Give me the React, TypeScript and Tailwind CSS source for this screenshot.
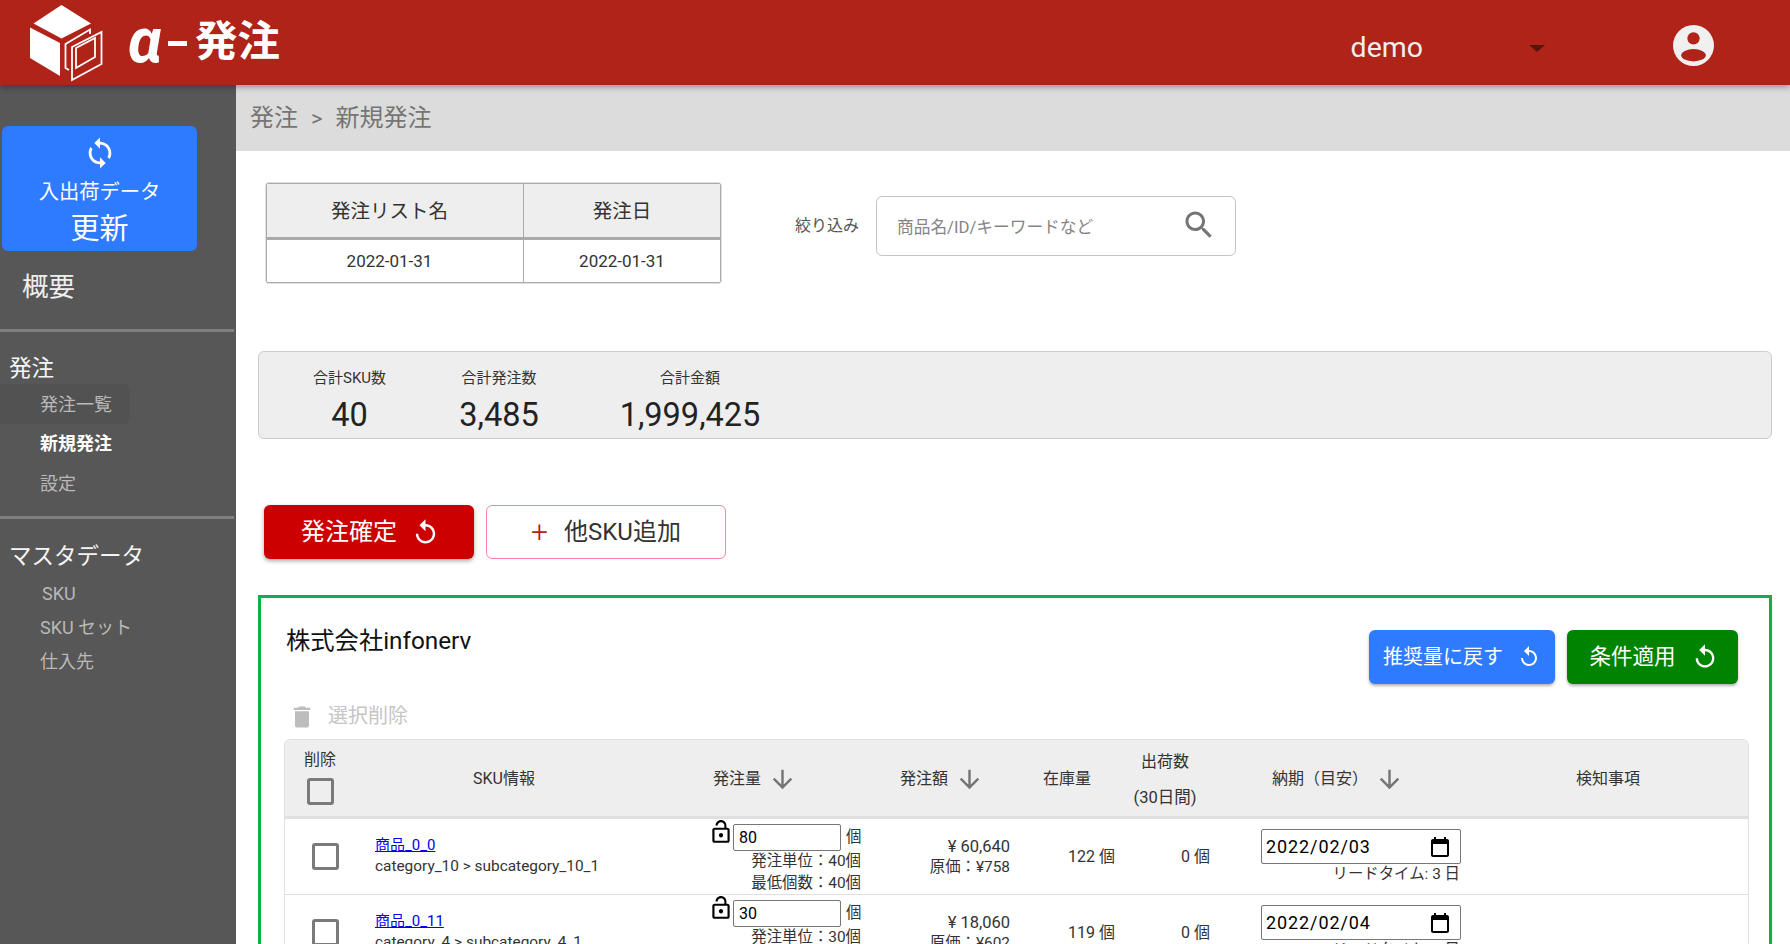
import React, { FC } from "react";

const REPLAY = "M12 5V1L7 6l5 5V7c3.31 0 6 2.69 6 6s-2.69 6-6 6-6-2.69-6-6H4c0 4.42 3.58 8 8 8s8-3.58 8-8-3.58-8-8-8z";
const SYNC = "M12 4V1L8 5l4 4V6c3.31 0 6 2.69 6 6 0 1.01-.25 1.97-.7 2.8l1.46 1.46C19.54 15.03 20 13.57 20 12c0-4.42-3.58-8-8-8zm0 14c-3.31 0-6-2.69-6-6 0-1.01.25-1.97.7-2.8L5.24 7.74C4.46 8.97 4 10.43 4 12c0 4.42 3.58 8 8 8v3l4-4-4-4v3z";
const SEARCH = "M15.5 14h-.79l-.28-.27C15.41 12.59 16 11.11 16 9.5 16 5.91 13.09 3 9.5 3S3 5.91 3 9.5 5.91 16 9.5 16c1.61 0 3.09-.59 4.23-1.57l.27.28v.79l5 4.99L20.49 19l-4.99-5zm-6 0C7.01 14 5 11.99 5 9.5S7.01 5 9.5 5 14 7.01 14 9.5 11.99 14 9.5 14z";
const TRASH = "M6 19c0 1.1.9 2 2 2h8c1.1 0 2-.9 2-2V7H6v12zM19 4h-3.5l-1-1h-5l-1 1H5v2h14V4z";
const ARROW = "M20 12l-1.41-1.41L13 16.17V4h-2v12.17l-5.58-5.59L4 12l8 8 8-8z";
const LOCK = "M12 17c1.1 0 2-.9 2-2s-.9-2-2-2-2 .9-2 2 .9 2 2 2zm6-9h-1V6c0-2.76-2.24-5-5-5S7 3.24 7 6h1.9c0-1.71 1.39-3.1 3.1-3.1 1.71 0 3.1 1.39 3.1 3.1v2H6c-1.1 0-2 .9-2 2v10c0 1.1.9 2 2 2h12c1.1 0 2-.9 2-2V10c0-1.1-.9-2-2-2zm0 12H6V10h12v10z";
const CALENDAR = "M19 4h-1V2h-2v2H8V2H6v2H5c-1.1 0-2 .9-2 2v14c0 1.1.9 2 2 2h14c1.1 0 2-.9 2-2V6c0-1.1-.9-2-2-2zm0 16H5V9h14v11z";

const Icon: FC<{ d: string; className?: string }> = ({ d, className }) => (
  <svg viewBox="0 0 24 24" fill="currentColor" className={className}>
    <path d={d} />
  </svg>
);

const Logo = () => (
  <svg viewBox="0 0 90 85" className="w-[90px] h-[85px] shrink-0">
    <polygon points="41.5,5 71,23.5 41.5,38.5 13.5,23.5" fill="#fff" />
    <polygon points="10,27.5 40,43 40,76 10,58" fill="#fff" />
    <g fill="none" stroke="#fff" strokeWidth="1.8">
      <path d="M49 70 L45.5 68 L45.5 44 L70 29.5 L70 34" />
      <polygon points="52,47 81.5,32 81.5,64 52,80" />
      <path d="M56 48 L56 68 L75 57 L75 38 Z" />
    </g>
  </svg>
);

const Checkbox: FC<{ className?: string }> = ({ className }) => (
  <div className={`w-[27px] h-[27px] border-[3px] border-[#7a7a7a] rounded-[3px] ${className ?? ""}`} />
);

const SortHead: FC<{ label: string; className: string }> = ({ label, className }) => (
  <div className={`flex items-center gap-[7px] pt-[2px] ${className}`}>
    <span>{label}</span>
    <Icon d={ARROW} className="w-[29px] h-[29px] text-[#757575]" />
  </div>
);

interface RowData {
  name: string;
  category: string;
  qty: string;
  unit: string;
  min: string;
  amount: string;
  cost: string;
  stock: string;
  date: string;
  lead: string;
}

const rows: RowData[] = [
  {
    name: "商品_0_0",
    category: "category_10 > subcategory_10_1",
    qty: "80",
    unit: "40",
    min: "40",
    amount: "¥ 60,640",
    cost: "原価：¥758",
    stock: "122 個",
    date: "2022/02/03",
    lead: "リードタイム: 3 日",
  },
  {
    name: "商品_0_11",
    category: "category_4 > subcategory_4_1",
    qty: "30",
    unit: "30",
    min: "30",
    amount: "¥ 18,060",
    cost: "原価：¥602",
    stock: "119 個",
    date: "2022/02/04",
    lead: "リードタイム: 2 日",
  },
];

const GRID = "grid grid-cols-[90px_329px_166px_150px_110px_90px_260px_1fr]";

const Row: FC<{ row: RowData }> = ({ row }) => (
  <div className={`${GRID} h-[75px] border-b border-[#e0e0e0] box-content text-[15.4px] text-[#333]`}>
    <div className="flex items-center pl-[27px]">
      <Checkbox className="bg-white" />
    </div>
    <div className="flex flex-col justify-center -mt-[1px]">
      <a href="#" className="text-[15px] leading-[21px] text-[#0000ee] underline w-fit">
        {row.name}
      </a>
      <span className="leading-[21px] whitespace-nowrap">{row.category}</span>
    </div>
    <div className="pt-[2px] pl-[8px] w-[157px]">
      <div className="flex items-start">
        <Icon d={LOCK} className="w-[26px] h-[26px] text-black -ml-[4px] -mt-[2px] shrink-0" />
        <input
          type="text"
          defaultValue={row.qty}
          className="w-[108px] h-[27px] -ml-[1px] mt-[3px] border border-[#767676] rounded-[2px] px-[5px] text-[16px] text-black outline-none"
        />
        <span className="ml-[5px] mt-[5px]">個</span>
      </div>
      <div className="text-right leading-[22px] -mt-[1px] whitespace-nowrap">
        <div>発注単位：{row.unit}個</div>
        <div>最低個数：{row.min}個</div>
      </div>
    </div>
    <div className="flex flex-col justify-center items-end pr-[10px] leading-[21px]">
      <span className="text-[16.5px]">{row.amount}</span>
      <span>{row.cost}</span>
    </div>
    <div className="flex items-center justify-end pr-[15px] text-[16px]">{row.stock}</div>
    <div className="flex items-center justify-end pr-[10px] text-[16px]">0 個</div>
    <div className="pt-[10px] pl-[41px] w-[241px]">
      <div className="w-[200px] h-[35px] border border-[#767676] rounded-[2px] flex items-center justify-between pl-[4px] pr-[8px] text-[18px] text-black tracking-[0.9px]">
        <span>{row.date}</span>
        <Icon d={CALENDAR} className="w-6 h-6 text-black" />
      </div>
      <div className="text-right leading-[20px] pr-[1px] whitespace-nowrap">{row.lead}</div>
    </div>
    <div />
  </div>
);

const SideItem: FC<{ label: string; className: string }> = ({ label, className }) => (
  <div className={`w-[130px] flex items-center text-[18px] whitespace-nowrap ${className}`}>{label}</div>
);

const Stat: FC<{ label: string; value: string; className: string }> = ({ label, value, className }) => (
  <div className={`flex flex-col items-center whitespace-nowrap ${className}`}>
    <span className="text-[15px] leading-[20px] text-[#333] mt-[1px]">{label}</span>
    <span className="text-[32.5px] leading-[44px] text-[#222] mt-[5px]">{value}</span>
  </div>
);

const App: FC = () => {
  return (
    <div className="h-[944px] w-[1790px] overflow-hidden flex flex-col bg-white font-[Roboto,'Noto_Sans_CJK_JP',sans-serif]">
      <header className="relative z-10 h-[85px] shrink-0 bg-[#af2318] shadow-[0_2px_6px_rgba(0,0,0,0.35)] flex items-center pl-[20px]">
        <Logo />
        <div className="ml-[18px] flex items-center text-white font-bold leading-none">
          <span className="w-[32px] text-[62px] italic leading-none -mt-[4px]">α</span>
          <span className="ml-[8px] w-[19px] h-[5px] bg-white mt-[2px]" />
          <span className="ml-[8px] text-[42.5px] -mt-[1px] whitespace-nowrap">発注</span>
        </div>
        <div className="ml-auto pr-[76px] flex items-center">
          <span className="text-[28.5px] text-[#eeeeee] leading-none mt-[11px] ml-[1px]">demo</span>
          <div className="ml-[106px] mt-[12px] w-0 h-0 border-x-[8px] border-x-transparent border-t-[7px] border-t-[#5a120c]" />
          <svg viewBox="0 0 40 40" className="w-[41px] h-[41px] ml-[128px] mt-[6px]">
            <circle cx="20" cy="20" r="20" fill="#f0f0f0" />
            <circle cx="20" cy="13" r="6" fill="#af2318" />
            <ellipse cx="20" cy="29.5" rx="12" ry="6" fill="#af2318" />
          </svg>
        </div>
      </header>

      <div className="flex flex-1 min-h-0">
        <aside className="w-[236px] shrink-0 bg-[#575757] text-white">
          <div className="ml-[2px] mt-[41px] w-[195px] h-[125px] rounded-[6px] bg-[#2e7bff] flex flex-col items-center">
            <Icon d={SYNC} className="w-[34px] h-[34px] mt-[10px]" />
            <span className="text-[20.3px] leading-[28px] mt-[8px]">入出荷データ</span>
            <span className="text-[29px] leading-[36px] mt-[5px]">更新</span>
          </div>
          <div className="pl-[22px] mt-[18px] text-[26.5px] leading-[36px] text-[#eeeeee]">概要</div>
          <div className="w-[234px] h-[3px] bg-[#808080] mt-[24px]" />
          <div className="pl-[9px] mt-[20px] text-[22.5px] leading-[32px] text-[#f5f5f5]">発注</div>
          <SideItem label="発注一覧" className="h-[40px] pl-[40px] text-[#b9b9b9] bg-[#525252] rounded-r-[6px]" />
          <SideItem label="新規発注" className="h-[39px] pl-[40px] font-bold text-white" />
          <SideItem label="設定" className="h-[40px] pl-[40px] text-[#b9b9b9]" />
          <div className="w-[234px] h-[3px] bg-[#808080] mt-[13px]" />
          <div className="pl-[9px] mt-[21px] text-[22.5px] leading-[32px] text-[#f5f5f5]">マスタデータ</div>
          <SideItem label="SKU" className="h-[34px] mt-[4px] pl-[42px] text-[#b9b9b9]" />
          <SideItem label="SKU セット" className="h-[34px] pl-[40px] text-[#b9b9b9]" />
          <SideItem label="仕入先" className="h-[35px] pl-[40px] text-[#b9b9b9]" />
        </aside>

        <main className="flex-1 min-w-0">
          <div className="h-[66px] bg-[#dcdcdc] flex items-center pl-[14px] text-[24px] text-[#757575]">
            発注
            <span className="mx-[13px] text-[22px]">&gt;</span>
            新規発注
          </div>

          <div className="flex items-start pt-[32px] pl-[30px]">
            <div className="w-[455px] h-[100px] border border-[#aaaaaa] outline-1 outline-[#e0e0e0] rounded-[2px] grid grid-cols-[257px_1fr] grid-rows-[56px_1fr] text-center text-[#333]">
              <div className="bg-[#eeeeee] border-r border-b-[3px] border-[#aaaaaa] flex items-center justify-center text-[19.5px] pr-[11px] pt-[2px]">発注リスト名</div>
              <div className="bg-[#eeeeee] border-b-[3px] border-[#aaaaaa] flex items-center justify-center text-[19.5px] pt-[2px]">発注日</div>
              <div className="border-r border-[#aaaaaa] flex items-center justify-center text-[17px] pr-[11px] pt-[1px]">2022-01-31</div>
              <div className="flex items-center justify-center text-[17px] pt-[1px]">2022-01-31</div>
            </div>
            <span className="ml-[74px] mt-[31px] text-[16px] leading-[24px] text-[#555]">絞り込み</span>
            <div className="ml-[17px] mt-[13px] w-[360px] h-[60px] border border-[#c4c4c4] rounded-[6px] flex items-center justify-between pl-[20px] pr-[20px]">
              <span className="text-[16.7px] text-[#858585] mt-[3px]">商品名/ID/キーワードなど</span>
              <Icon d={SEARCH} className="w-[36px] h-[36px] text-[#757575] -mr-[2px] -mt-[2px]" />
            </div>
          </div>

          <div className="mt-[68px] ml-[22px] w-[1514px] h-[88px] bg-[#eeeeee] border border-[#cccccc] rounded-[6px] flex pt-[15px]">
            <Stat label="合計SKU数" value="40" className="ml-[53px] w-[75px]" />
            <Stat label="合計発注数" value="3,485" className="ml-[72px] w-[80px]" />
            <Stat label="合計金額" value="1,999,425" className="ml-[80px] w-[142px]" />
          </div>

          <div className="mt-[66px] ml-[28px] flex gap-[12px]">
            <button className="w-[210px] h-[54px] bg-[#cc0000] rounded-[6px] shadow-[0_2px_4px_rgba(0,0,0,0.35)] text-white text-[24px] flex items-center justify-center gap-[14px] pl-[3px]">
              発注確定
              <Icon d={REPLAY} className="w-[29px] h-[29px]" />
            </button>
            <button className="w-[240px] h-[54px] border border-[#ff80a8] rounded-[6px] bg-white text-[#333] text-[24px] flex items-center justify-center gap-[16px]">
              <span className="text-[#af2318] text-[30px] leading-none font-light">+</span>
              他SKU追加
            </button>
          </div>

          <section className="mt-[36px] ml-[22px] w-[1514px] border-[3px] border-[#0fae4b] pb-[40px]">
            <div className="h-[102px] flex items-start justify-between pl-[25px] pr-[31px]">
              <h2 className="text-[24.3px] leading-[36px] text-[#111] mt-[25px]">株式会社infonerv</h2>
              <div className="flex gap-[12px] mt-[32px]">
                <button className="w-[186px] h-[54px] bg-[#2e7bff] rounded-[6px] shadow-[0_2px_3px_rgba(0,0,0,0.3)] text-white text-[20px] flex items-center justify-center gap-[14px]">
                  推奨量に戻す
                  <Icon d={REPLAY} className="w-[24px] h-[24px]" />
                </button>
                <button className="w-[171px] h-[54px] bg-[#008400] rounded-[6px] shadow-[0_2px_3px_rgba(0,0,0,0.3)] text-white text-[21.5px] flex items-center justify-center gap-[15px] pl-[3px]">
                  条件適用
                  <Icon d={REPLAY} className="w-[28px] h-[28px]" />
                </button>
              </div>
            </div>

            <div className="h-[39px] flex items-start pl-[27px] text-[#c5c5c5]">
              <Icon d={TRASH} className="w-[28px] h-[28px] text-[#bdbdbd] mt-[3px]" />
              <span className="ml-[12px] text-[20px] leading-[28px] mt-[2px]">選択削除</span>
            </div>

            <div className="ml-[23px] w-[1465px] border-x border-t border-[#e0e0e0] rounded-t-[6px] overflow-hidden">
              <div className={`${GRID} h-[79px] bg-[#eeeeee] border-b-[3px] border-[#e0e0e0] text-[16px] text-[#333]`}>
                <div className="flex flex-col items-center pr-[20px] pt-[8px]">
                  <span className="leading-[24px]">削除</span>
                  <Checkbox className="mt-[6px]" />
                </div>
                <div className="flex items-center pl-[98px] pt-[2px]">SKU情報</div>
                <SortHead label="発注量" className="pl-[9px]" />
                <SortHead label="発注額" className="pl-[30px]" />
                <div className="flex items-center pl-[23px] pt-[2px]">在庫量</div>
                <div className="flex flex-col items-center pt-[10px] pr-[20px] whitespace-nowrap">
                  <span className="leading-[24px]">出荷数</span>
                  <span className="text-[16.5px] leading-[24px] mt-[12px]">(30日間)</span>
                </div>
                <SortHead label="納期（目安）" className="pl-[52px]" />
                <div className="flex items-center pl-[96px] pt-[2px]">検知事項</div>
              </div>
              {rows.map((row) => (
                <Row key={row.name} row={row} />
              ))}
            </div>
          </section>
        </main>
      </div>
    </div>
  );
};

export default App;
